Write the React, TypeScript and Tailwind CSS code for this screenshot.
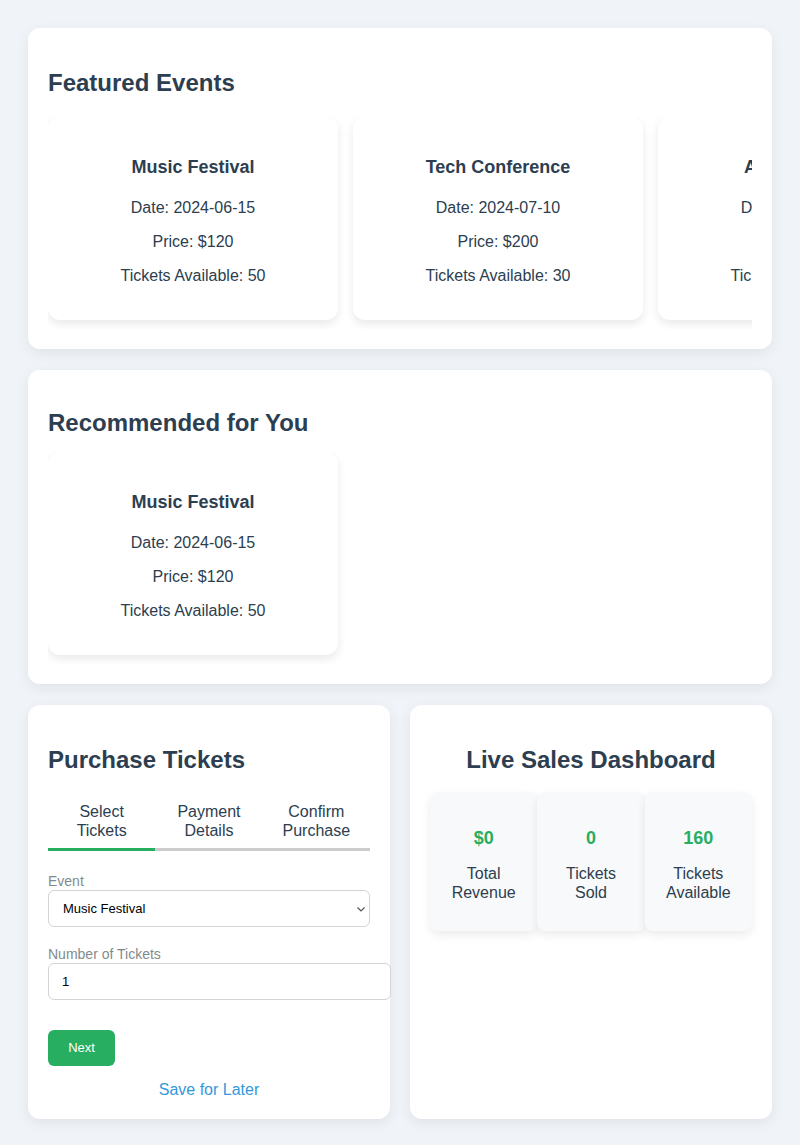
import { useState } from 'react';

interface EventItem {
  name: string;
  date: string;
  price: number;
  tickets: number;
}

const events: EventItem[] = [
  { name: 'Music Festival', date: '2024-06-15', price: 120, tickets: 50 },
  { name: 'Tech Conference', date: '2024-07-10', price: 200, tickets: 30 },
  { name: 'Art Exhibition', date: '2024-08-05', price: 80, tickets: 80 },
];

const EventCard = ({ ev }: { ev: EventItem }) => (
  <div className="w-[290px] flex-none rounded-xl bg-white px-5 pb-[19px] pt-[39px] text-center shadow-[0_4px_10px_rgba(0,0,0,0.09)]">
    <h3 className="mb-[21px] text-[18px] font-bold leading-[22px]">{ev.name}</h3>
    <p className="mb-4 leading-[18px]">Date: {ev.date}</p>
    <p className="mb-4 leading-[18px]">Price: ${ev.price}</p>
    <p className="mb-4 leading-[18px]">Tickets Available: {ev.tickets}</p>
  </div>
);

const Section = ({ title, top, children }: { title: string; top: string; children: React.ReactNode }) => (
  <section className={`rounded-xl bg-white px-5 pb-5 shadow-[0_4px_14px_rgba(0,0,0,0.07)] ${top}`}>
    <h2 className="mb-5 text-[24px] font-bold leading-[28px]">{title}</h2>
    {children}
  </section>
);

const App = () => {
  const [step] = useState(0);
  const tabs = [
    ['Select', 'Tickets'],
    ['Payment', 'Details'],
    ['Confirm', 'Purchase'],
  ];

  return (
    <div className="min-h-[1145px] bg-[#f0f4f8] px-7 py-7 font-['Liberation_Sans',Arial,sans-serif] text-[16px] text-[#2c3e50]">
      <div className="flex flex-col gap-[21px]">
        <Section title="Featured Events" top="pt-[41px]">
          <div className="flex gap-[15px] overflow-hidden pb-[9px]">
            {events.map((ev) => (
              <EventCard key={ev.name} ev={ev} />
            ))}
          </div>
        </Section>

        <Section title="Recommended for You" top="pt-[39px]">
          <div className="-mt-[5px] flex gap-[15px] overflow-hidden pb-[9px]">
            <EventCard ev={events[0]} />
          </div>
        </Section>

        <div className="grid grid-cols-2 gap-5">
          <section className="rounded-xl bg-white px-5 pb-5 pt-[41px] shadow-[0_4px_14px_rgba(0,0,0,0.07)]">
            <h2 className="mb-[28px] text-[24px] font-bold leading-[28px]">Purchase Tickets</h2>
            <div className="grid grid-cols-3">
              {tabs.map((t, i) => (
                <div
                  key={t[0]}
                  className={`border-b-[3px] pb-[8px] text-center leading-[19px] ${
                    i === step ? 'border-[#27ae60]' : 'border-[#cccccc]'
                  }`}
                >
                  {t[0]}
                  <br />
                  {t[1]}
                </div>
              ))}
            </div>
            <label className="mt-[22px] block text-[14px] leading-[16px] text-[#7f8c8d]">Event</label>
            <div className="relative mt-[1px]">
              <select className="h-[37px] w-full appearance-none rounded-md border border-[#d4d4d4] bg-white pl-[14px] text-[13px] text-black outline-none">
                <option>Music Festival</option>
                <option>Tech Conference</option>
                <option>Art Exhibition</option>
              </select>
              <svg
                className="pointer-events-none absolute right-[4px] top-[15px] h-[8px] w-[10px]"
                viewBox="0 0 10 8"
                fill="none"
                stroke="#555"
                strokeWidth="1.2"
              >
                <path d="M1.5 2.5 5 6 8.5 2.5" />
              </svg>
            </div>
            <label className="mt-[19px] block text-[14px] leading-[16px] text-[#7f8c8d]">Number of Tickets</label>
            <input
              type="number"
              defaultValue={1}
              className="mt-[1px] block h-[37px] w-[343px] rounded-md border border-[#d4d4d4] bg-white px-[13px] text-[13px] text-black outline-none"
            />
            <button className="mt-[30px] h-[36px] w-[67px] rounded-md bg-[#27ae60] text-[13px] font-medium text-white">
              Next
            </button>
            <p className="mt-[15px] text-center leading-[18px] text-[#3498db]">Save for Later</p>
          </section>

          <section className="rounded-xl bg-white px-5 pb-5 pt-[41px] shadow-[0_4px_14px_rgba(0,0,0,0.07)]">
            <h2 className="mb-[18px] text-center text-[24px] font-bold leading-[28px]">Live Sales Dashboard</h2>
            <div className="grid grid-cols-3">
              {[
                ['$0', 'Total', 'Revenue'],
                ['0', 'Tickets', 'Sold'],
                ['160', 'Tickets', 'Available'],
              ].map(([v, a, b]) => (
                <div
                  key={b}
                  className="h-[139px] rounded-lg bg-[#f8f9fa] pt-[36px] text-center shadow-[0_4px_10px_rgba(0,0,0,0.08)]"
                >
                  <div className="text-[18px] font-bold leading-[20px] text-[#27ae60]">{v}</div>
                  <div className="mt-[16px] leading-[19px]">
                    {a}
                    <br />
                    {b}
                  </div>
                </div>
              ))}
            </div>
          </section>
        </div>
      </div>
    </div>
  );
};

export default App;
